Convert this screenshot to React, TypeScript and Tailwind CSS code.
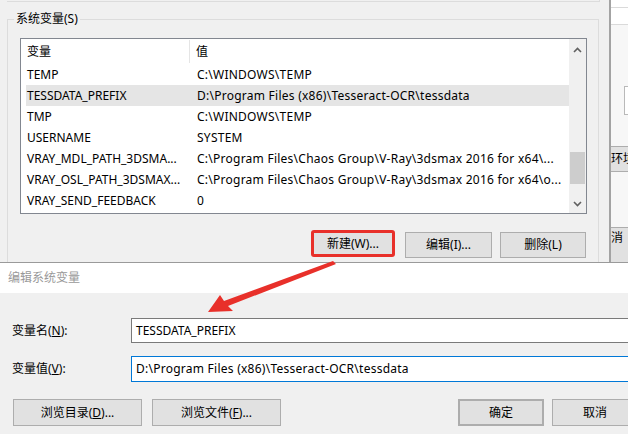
import React from "react";

const rows: [string, string][] = [
  ["TEMP", "C:\\WINDOWS\\TEMP"],
  ["TESSDATA_PREFIX", "D:\\Program Files (x86)\\Tesseract-OCR\\tessdata"],
  ["TMP", "C:\\WINDOWS\\TEMP"],
  ["USERNAME", "SYSTEM"],
  ["VRAY_MDL_PATH_3DSMA...", "C:\\Program Files\\Chaos Group\\V-Ray\\3dsmax 2016 for x64\\..."],
  ["VRAY_OSL_PATH_3DSMAX...", "C:\\Program Files\\Chaos Group\\V-Ray\\3dsmax 2016 for x64\\o..."],
  ["VRAY_SEND_FEEDBACK", "0"],
];

function Chevron({ down }: { down?: boolean }) {
  return (
    <svg width="9" height="6" viewBox="0 0 9 6">
      <path
        d={down ? "M1 1 L4.5 4.5 L8 1" : "M1 5 L4.5 1.5 L8 5"}
        fill="none"
        stroke="#606060"
        strokeWidth="1.6"
      />
    </svg>
  );
}

function VarList() {
  return (
    <div className="ml-[12px] mt-[11px] w-[567px] h-[176px] border border-[#828790] bg-white flex">
      <div className="flex-1 flex flex-col">
        <div className="h-[25px] flex items-center">
          <div className="w-[169px] h-[23px] pl-[6px] flex items-center border-r border-[#e5e5e5]">变量</div>
          <div className="pl-[6px]">值</div>
        </div>
        {rows.map(([name, value]) => (
          <div
            key={name}
            className={
              "h-[21px] ml-[5px] flex items-center whitespace-nowrap " +
              (name === "TESSDATA_PREFIX" ? "bg-[#e5e5e5]" : "")
            }
          >
            <div className="w-[171px] pl-[1px] overflow-hidden">{name}</div>
            <div className="overflow-hidden tracking-[0.25px]">{value}</div>
          </div>
        ))}
      </div>
      <div className="w-[17px] bg-[#f0f0f0] flex flex-col items-center">
        <div className="h-[20px] flex items-center justify-center mt-[1px]">
          <Chevron />
        </div>
        <div className="h-[92px]" />
        <div className="w-[15px] h-[32px] bg-[#cdcdcd]" />
        <div className="flex-1" />
        <div className="h-[18px] flex items-center justify-center">
          <Chevron down />
        </div>
      </div>
    </div>
  );
}

function Btn({ children, className }: { children: React.ReactNode; className?: string }) {
  return (
    <div
      className={
        "flex items-center justify-center bg-[#e1e1e1] border border-[#adadad] whitespace-nowrap " +
        (className ?? "")
      }
    >
      {children}
    </div>
  );
}

export default function App() {
  return (
    <div className="relative w-[628px] h-[434px] overflow-hidden bg-[#f0f0f0] text-[12px] leading-[16px] text-black font-['Noto_Sans','Noto_Sans_CJK_SC',sans-serif]">
      {/* background window: 环境变量 */}
      <div className="h-[262px] flex">
        <div className="w-[611px] shrink-0 border-r-2 border-[#a3a3a3] flex flex-col">
          <div className="ml-[7px] w-[593px] h-[2px] border-b border-r border-[#dcdcdc]" />
          <fieldset className="ml-[7px] mt-[9px] w-[592px] flex-1 border border-b-0 border-[#dcdcdc]">
            <legend className="ml-[6px] px-[2px]">系统变量(S)</legend>
            <VarList />
            <div className="mt-[16px] mr-[12px] flex justify-end items-start">
              <div className="w-[84px] h-[27px] flex items-center justify-center bg-[#e1e1e1] border-[3px] border-[#e8302a] rounded-[3px]">
                新建(W)...
              </div>
              <Btn className="ml-[10px] mt-[2px] w-[87px] h-[26px]">编辑(I)...</Btn>
              <Btn className="ml-[8px] mt-[2px] w-[86px] h-[26px]">删除(L)</Btn>
            </div>
          </fieldset>
        </div>
        <div className="flex-1 bg-[#f7f7f7] flex flex-col overflow-hidden">
          <div className="h-[8px] border-b border-[#dadada] bg-white" />
          <div className="h-[17px] border-b border-[#dadada] bg-white" />
          <div className="h-[61px]" />
          <div className="ml-[13px] h-[29px] border border-r-0 border-[#b9b9b9] bg-white" />
          <div className="h-[31px]" />
          <div className="h-[26px] bg-[#e1e1e1] border-y border-[#adadad] flex items-center whitespace-nowrap">
            环境变量
          </div>
          <div className="h-[55px]" />
          <div className="flex-1 bg-[#e1e1e1] border-t border-[#adadad] pt-[2px] flex whitespace-nowrap">
            消
          </div>
        </div>
      </div>

      {/* foreground dialog: 编辑系统变量 */}
      <div className="h-[172px] border-t border-[#9a9a9a] flex flex-col">
        <div className="h-[30px] bg-white flex items-center pl-[8px] text-[#999999]">编辑系统变量</div>
        <div className="flex-1 flex flex-col pt-[25px] pl-[12px]">
          <div className="flex items-center h-[25px]">
            <div className="w-[119px]">
              变量名(<span className="underline">N</span>):
            </div>
            <div className="flex-1 h-[25px] border border-r-0 border-[#7a7a7a] bg-white flex items-center pl-[4px]">
              TESSDATA_PREFIX
            </div>
          </div>
          <div className="flex items-center h-[26px] mt-[13px]">
            <div className="w-[119px]">
              变量值(<span className="underline">V</span>):
            </div>
            <div className="flex-1 h-[26px] border border-r-0 border-[#0078d7] bg-white flex items-center pl-[4px] whitespace-nowrap tracking-[0.25px]">
              D:\Program Files (x86)\Tesseract-OCR\tessdata
            </div>
          </div>
          <div className="flex mt-[17px] items-start">
            <Btn className="ml-[1px] w-[129px] h-[27px]">
              浏览目录(<span className="underline">D</span>)...
            </Btn>
            <Btn className="ml-[10px] w-[129px] h-[27px]">
              浏览文件(<span className="underline">F</span>)...
            </Btn>
            <div className="flex-1" />
            <Btn className="w-[86px] h-[27px] border-2 border-[#0078d7]">确定</Btn>
            <Btn className="ml-[8px] w-[86px] h-[27px] -mr-[10px] shrink-0">取消</Btn>
          </div>
        </div>
      </div>

      {/* annotation arrow */}
      <svg className="absolute left-0 top-0 pointer-events-none" width="628" height="434">
        <polygon
          points="208,312 220,295 224,301 333,261 336,264 228,306 233,311"
          fill="#e8302a"
        />
      </svg>
    </div>
  );
}
